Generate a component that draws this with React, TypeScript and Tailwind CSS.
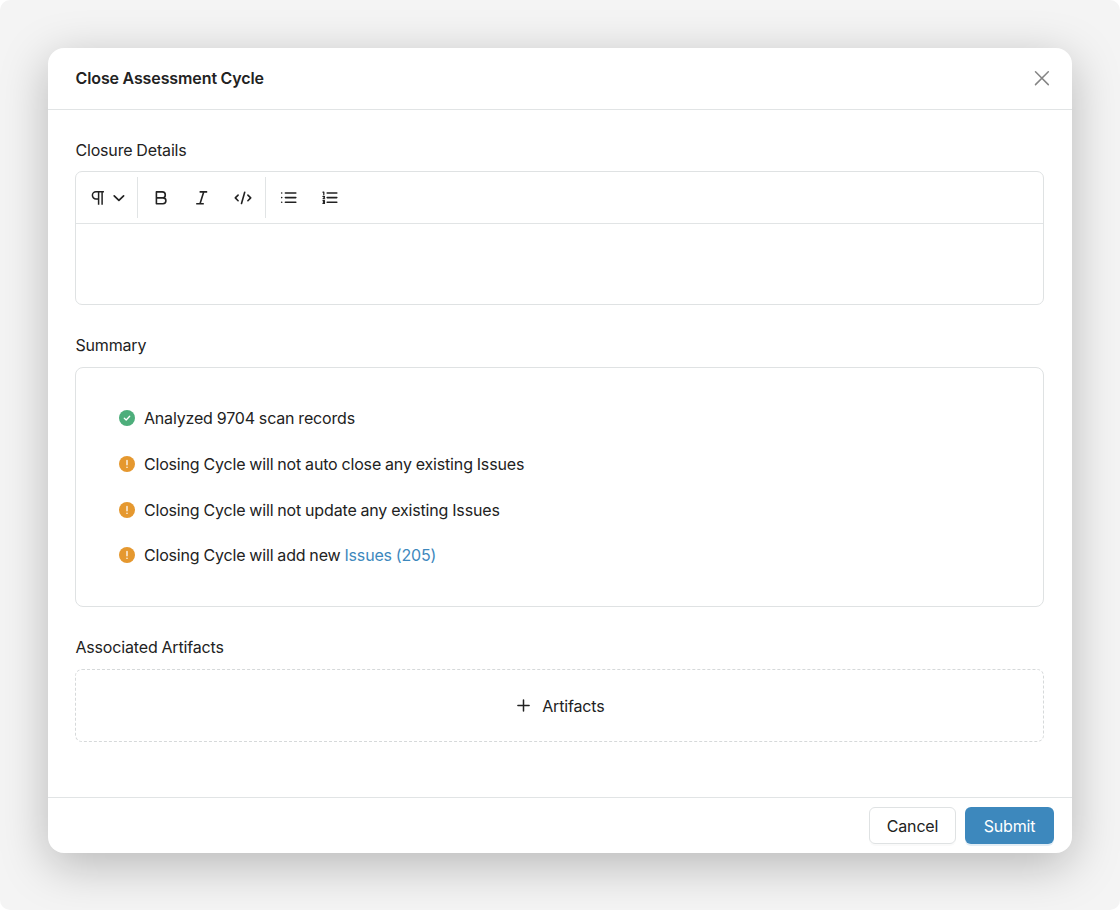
import type { ReactNode } from 'react';

function Tool({ children }: { children: ReactNode }) {
  return (
    <button className="flex h-[41px] w-[41px] items-center justify-center">
      <svg width="20" height="20" viewBox="0 0 20 20" fill="none" stroke="currentColor" strokeWidth="1.6" strokeLinecap="round" strokeLinejoin="round">
        {children}
      </svg>
    </button>
  );
}

function Toolbar() {
  return (
    <div className="flex h-[52px] items-center border-b border-[#e1e4e5] text-[#222]">
      <button className="flex h-[41px] w-[62px] items-center border-r border-[#e1e4e5] pl-[12px]">
        <svg width="20" height="20" viewBox="0 0 20 20" fill="none" stroke="currentColor" strokeWidth="1.5" strokeLinecap="square" strokeLinejoin="round">
          <path d="M10.2 10.9H8a3.6 3.6 0 0 1 0-7.2h7.2M10.6 3.9v12M14.1 3.9v12" />
        </svg>
        <svg className="ml-[1px]" width="20" height="20" viewBox="0 0 20 20" fill="none" stroke="currentColor" strokeWidth="1.7" strokeLinecap="round" strokeLinejoin="round">
          <path d="M5.2 7.8l4.7 4.6 4.7-4.6" />
        </svg>
      </button>
      <div className="flex w-[128px] border-r border-[#e1e4e5] pl-[2px]">
        <Tool><path d="M5.4 3.9h5.9a3 3 0 0 1 0 6H5.4zM5.4 9.9h6.6a2.9 2.9 0 0 1 0 5.8H5.4z" /></Tool>
        <Tool><path strokeLinecap="butt" d="M7.6 3.9h7.6M4.2 15.7h7.6M11.7 3.9L8 15.7" /></Tool>
        <Tool><path d="M5.1 7.1L2.3 9.9l2.8 2.8M14.9 7.1l2.8 2.8-2.8 2.8M11.7 4.2L8.5 15.5" /></Tool>
      </div>
      <div className="flex pl-[2px]">
        <Tool><path d="M6.4 5h10.4M6.4 9.6h10.4M6.4 14.2h10.4M2.7 5h.01M2.7 9.6h.01M2.7 14.2h.01" /></Tool>
        <Tool>
          <path d="M7.2 5h9.6M7.2 9.6h9.6M7.2 14.2h9.6" />
          <path strokeWidth="1.3" d="M3 4.2h.8v2.3M3 8.4h1.4v.9L3.2 10.7h1.4M3 12.6h1.4v2.8H3M3.4 14h1" />
        </Tool>
      </div>
    </div>
  );
}

function Status({ ok, children }: { ok?: boolean; children: ReactNode }) {
  return (
    <li className="flex h-[24px] items-center gap-[9px]">
      <svg width="16" height="16" viewBox="0 0 16 16" fill="none" strokeLinecap="round" strokeLinejoin="round">
        <circle cx="8" cy="8" r="8" fill={ok ? '#4dae7b' : '#e5982f'} />
        {ok ? (
          <path d="M5.3 8.2l1.9 1.8 3.5-3.8" stroke="#fff" strokeWidth="1.3" />
        ) : (
          <path d="M8 4.5v4.3M8 11.2v.2" stroke="#fff" strokeWidth="1.3" />
        )}
      </svg>
      <span>{children}</span>
    </li>
  );
}

export default function App() {
  return (
    <div className="h-[910px] w-[1120px] overflow-hidden bg-white font-['Inter',sans-serif] text-[16px] leading-[24px] tracking-[-0.16px] text-[#222] [word-spacing:-0.4px]">
      <div className="h-full rounded-[10px] bg-[#f4f4f4] p-[48px]">
        <div className="flex h-[805px] w-[1024px] flex-col rounded-[16px] bg-white shadow-[0_12px_48px_rgba(0,0,0,0.25)]">
          <header className="flex h-[62px] shrink-0 items-center justify-between border-b border-[#e1e4e5] pr-[22px] pb-[1px] pl-[27.5px]">
            <h1 className="font-semibold tracking-[-0.1px]">Close Assessment Cycle</h1>
            <button aria-label="Close">
              <svg width="16" height="16" viewBox="0 0 16 16" fill="none" stroke="#858585" strokeWidth="1.5" strokeLinecap="round">
                <path d="M1.5 1.8l12.8 12.8M14.3 1.8l-12.8 12.8" />
              </svg>
            </button>
          </header>
          <main className="flex-1 pt-[28px] pr-[27.6px] pl-[27.4px]">
            <h2>Closure Details</h2>
            <div className="mt-[9px] h-[134px] rounded-[7px] border border-[#dfe2e3]">
              <Toolbar />
            </div>
            <h2 className="mt-[28px]">Summary</h2>
            <div className="mt-[10px] h-[240px] rounded-[8px] border border-[#dfe2e3] pt-[38px] pl-[42.5px]">
              <ul className="flex flex-col gap-[21.8px]">
                <Status ok>Analyzed 9704 scan records</Status>
                <Status>Closing Cycle will not auto close any existing Issues</Status>
                <Status>Closing Cycle will not update any existing Issues</Status>
                <Status>Closing Cycle will add new <a className="text-[#3d88bd]">Issues (205)</a></Status>
              </ul>
            </div>
            <h2 className="mt-[28px]">Associated Artifacts</h2>
            <button className="mt-[10px] flex h-[73px] w-full items-center justify-center gap-[12px] rounded-[7px] border border-dashed border-[#d6d9da] pl-[2px]">
              <svg width="13" height="13" viewBox="0 0 13 13" stroke="currentColor" strokeWidth="1.5" strokeLinecap="round">
                <path d="M6.5 .9v11.2M.9 6.5h11.2" />
              </svg>
              Artifacts
            </button>
          </main>
          <footer className="flex h-[56px] shrink-0 items-center justify-end gap-[9px] border-t border-[#e1e4e5] pr-[18px]">
            <button className="h-[37px] w-[87px] rounded-[6px] border border-[#dfe2e3] shadow-[0_2px_0_rgba(0,0,0,0.02)]">Cancel</button>
            <button className="h-[37px] w-[89px] rounded-[6px] bg-[#3d88bd] text-white shadow-[0_2px_0_rgba(61,136,189,0.15)]">Submit</button>
          </footer>
        </div>
      </div>
    </div>
  );
}
